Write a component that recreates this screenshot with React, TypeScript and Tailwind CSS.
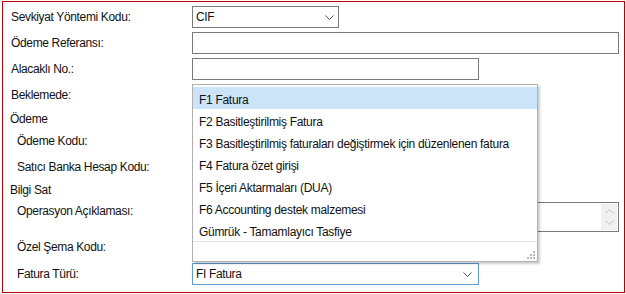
import React from 'react';

const font = { fontFamily: '"Liberation Sans", Arial, sans-serif' };

const Chevron: React.FC<{ up?: boolean; color?: string }> = ({ up, color = '#555' }) => (
  <svg width="9" height="5" viewBox="0 0 9 5" className="block">
    <polyline
      points={up ? '0.5,4.5 4.5,0.5 8.5,4.5' : '0.5,0.5 4.5,4.5 8.5,0.5'}
      fill="none"
      stroke={color}
      strokeWidth="1"
    />
  </svg>
);

const Label: React.FC<{ text: string; indent?: boolean }> = ({ text, indent }) => (
  <div className={`w-[189px] shrink-0 ${indent ? 'pl-[14px]' : 'pl-[8px]'}`}>{text}</div>
);

const options = [
  'F1 Fatura',
  'F2 Basitleştirilmiş Fatura',
  'F3 Basitleştirilmiş faturaları değiştirmek için düzenlenen fatura',
  'F4 Fatura özet girişi',
  'F5 İçeri Aktarmaları (DUA)',
  'F6 Accounting destek malzemesi',
  'Gümrük - Tamamlayıcı Tasfiye',
];

export default function App() {
  return (
    <div className="w-[626px] h-[294px] bg-white text-[12px] text-[#111] tracking-[-0.35px]" style={font}>
      <div className="relative ml-[2px] mt-[1px] w-[623px] h-[292px] border border-[#c00000] pt-[4px]">
        {/* Sevkiyat */}
        <div className="flex items-center h-[22px]">
          <Label text="Sevkiyat Yöntemi Kodu:" />
          <div className="w-[147px] h-[22px] border border-[#7a7a7a] flex items-center justify-between pl-[3px] pr-[4px]">
            <span>CIF</span>
            <Chevron />
          </div>
        </div>
        {/* Ödeme Referansı */}
        <div className="flex items-center h-[22px] mt-[4px]">
          <Label text="Ödeme Referansı:" />
          <div className="w-[427px] h-[22px] border border-[#7a7a7a]" />
        </div>
        {/* Alacaklı */}
        <div className="flex items-center h-[22px] mt-[4px]">
          <Label text="Alacaklı No.:" />
          <div className="w-[287px] h-[22px] border border-[#7a7a7a]" />
        </div>
        {/* Beklemede */}
        <div className="flex items-center h-[22px] mt-[4px]">
          <Label text="Beklemede:" />
          <div className="w-[147px] h-[22px] border border-[#7a7a7a]" />
        </div>
        <div className="flex items-center h-[22px] mt-[2px]">
          <div className="pl-[7px]">Ödeme</div>
        </div>
        <div className="flex items-center h-[22px]">
          <Label text="Ödeme Kodu:" indent />
        </div>
        <div className="flex items-center h-[22px] mt-[4px]">
          <Label text="Satıcı Banka Hesap Kodu:" indent />
        </div>
        <div className="flex items-center h-[22px] mt-[1px]">
          <div className="pl-[7px]">Bilgi Sat</div>
        </div>
        {/* Operasyon */}
        <div className="flex h-[30px] mt-[1px]">
          <Label text="Operasyon Açıklaması:" indent />
          <div className="w-[427px] h-[30px] border border-[#7a7a7a] flex justify-end p-[1px]">
            <div className="w-[16px] h-full bg-[#f0f0f0] flex flex-col items-center justify-around py-[2px]">
              <Chevron up color="#c2c2c2" />
              <Chevron color="#c2c2c2" />
            </div>
          </div>
        </div>
        <div className="flex items-center h-[22px] mt-[4px]">
          <Label text="Özel Şema Kodu:" indent />
        </div>
        {/* Fatura Türü */}
        <div className="flex items-center h-[22px] mt-[5px]">
          <Label text="Fatura Türü:" indent />
          <div className="w-[287px] h-[22px] border border-[#5b9bd5] flex items-center justify-between pl-[3px] pr-[6px]">
            <span>FI Fatura</span>
            <Chevron />
          </div>
        </div>

        {/* open dropdown list */}
        <div className="absolute left-[189px] top-[82px] w-[346px] h-[178px] bg-white border border-[#b0b0b0] shadow-[2px_2px_2px_rgba(0,0,0,0.2)] flex flex-col pt-[2px]">
          {options.map((o, i) => (
            <div
              key={o}
              className={`h-[22px] flex items-center pl-[6px] pt-[3px] tracking-[-0.3px] ${i === 0 ? 'bg-[#cce4f7]' : ''}`}
            >
              {o}
            </div>
          ))}
          <div className="flex-1 border-t border-[#e3e3e3] flex items-end justify-end pr-[2px] pb-[2px]">
            <svg width="8" height="8" viewBox="0 0 8 8">
              <rect x="6" y="0" width="2" height="2" fill="#bcbcbc" />
              <rect x="3" y="3" width="2" height="2" fill="#bcbcbc" />
              <rect x="6" y="3" width="2" height="2" fill="#bcbcbc" />
              <rect x="0" y="6" width="2" height="2" fill="#bcbcbc" />
              <rect x="3" y="6" width="2" height="2" fill="#bcbcbc" />
              <rect x="6" y="6" width="2" height="2" fill="#bcbcbc" />
            </svg>
          </div>
        </div>
      </div>
    </div>
  );
}
